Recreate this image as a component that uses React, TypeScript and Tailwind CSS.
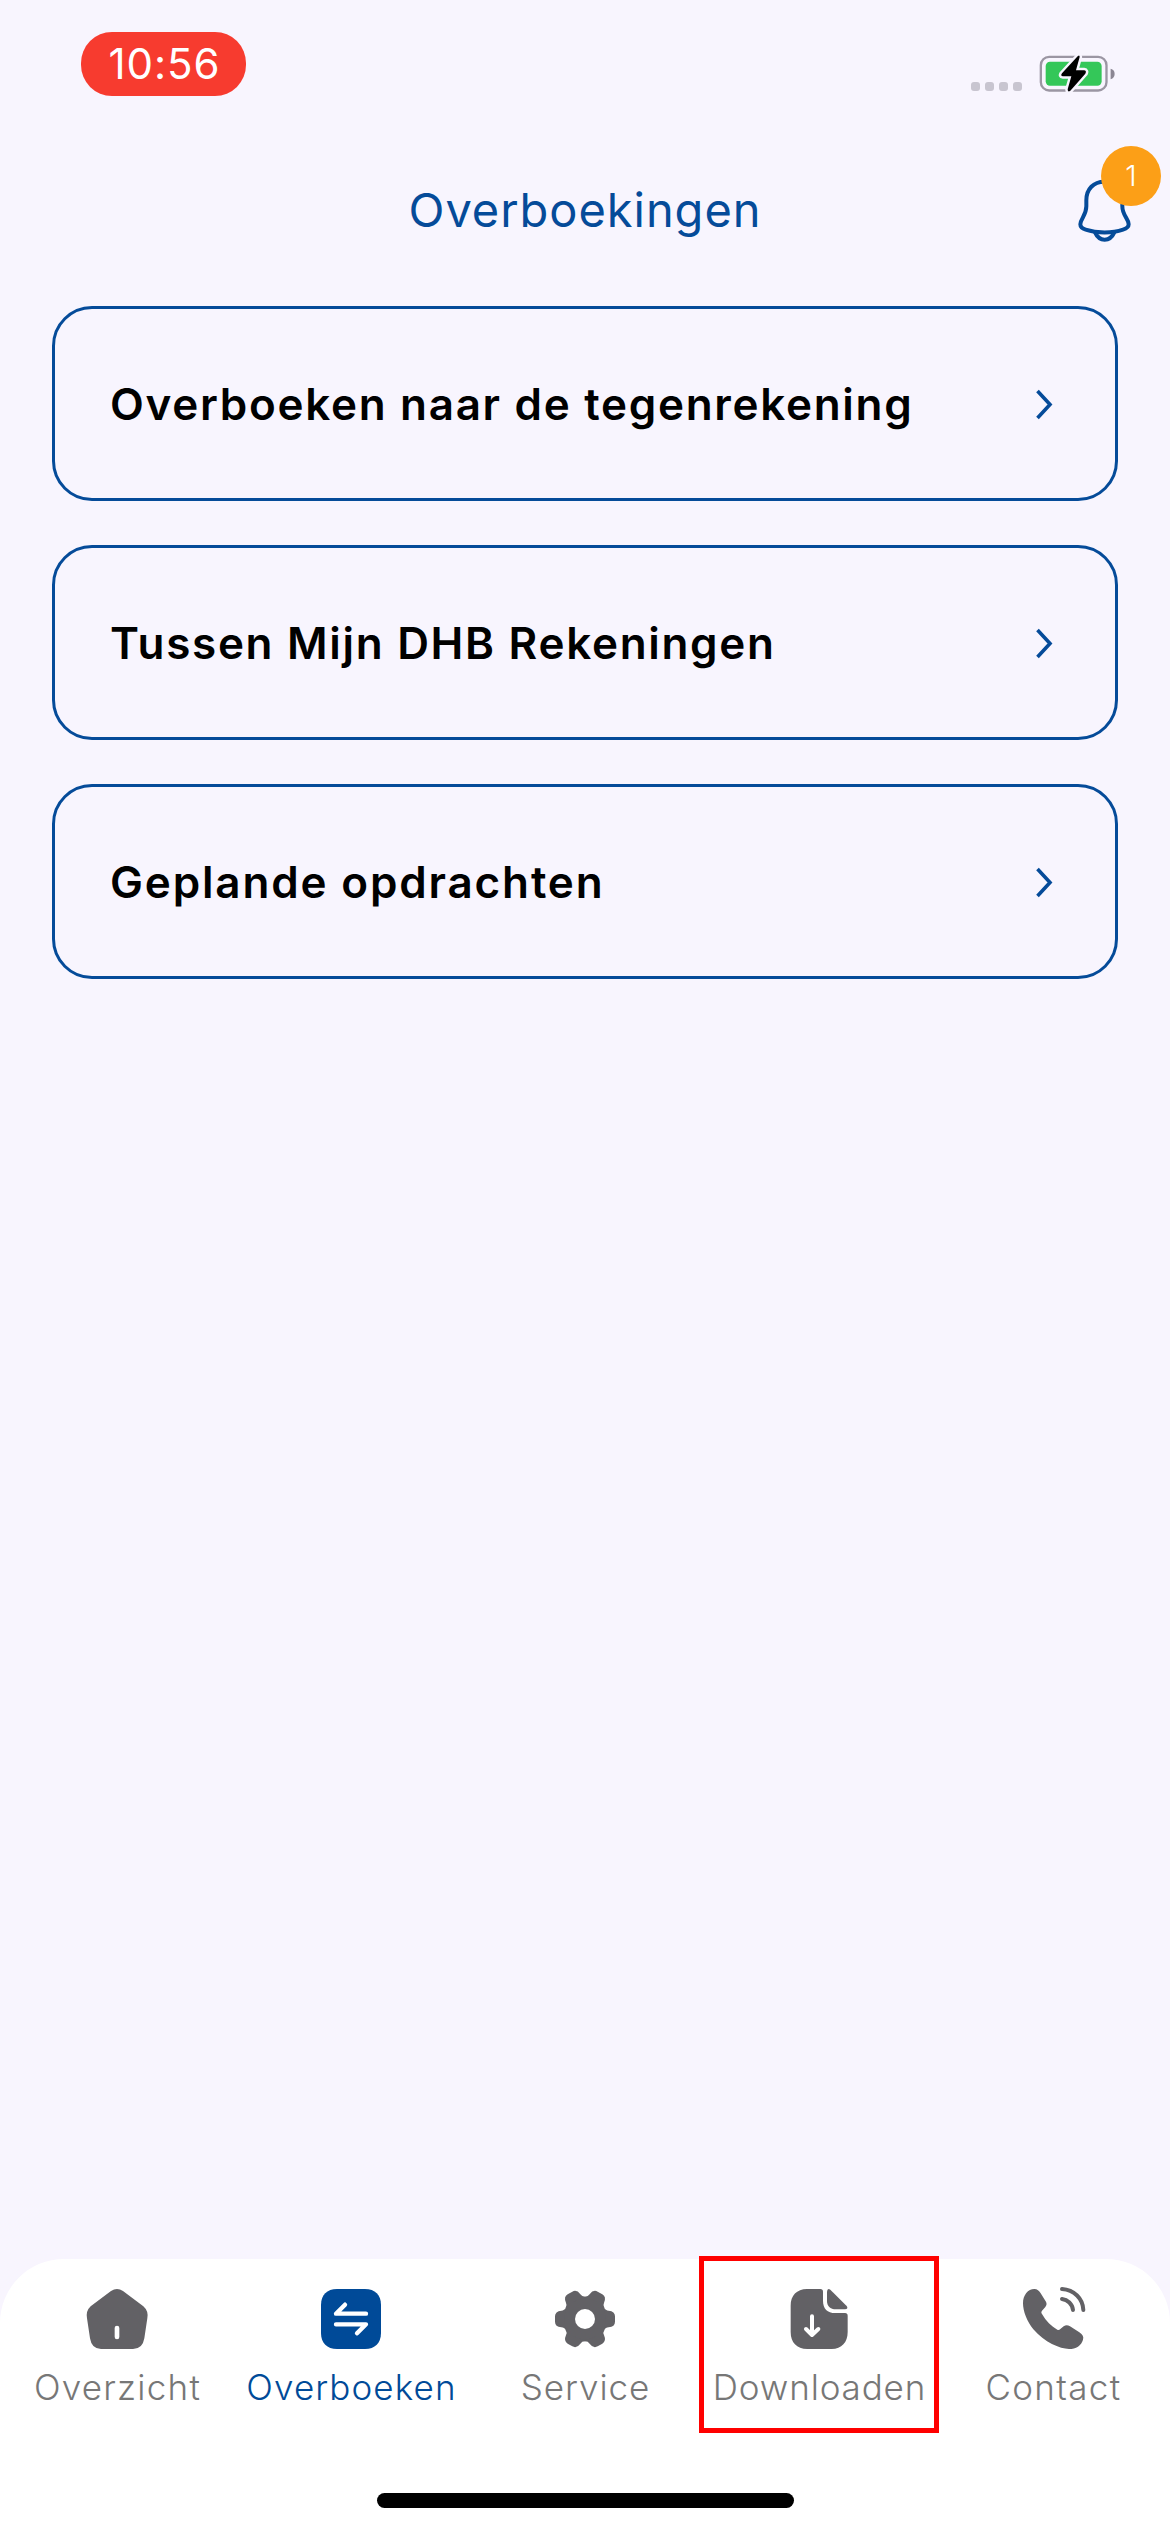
import type { ReactNode } from "react";

const GEAR_ANGLES = [0, 60, 120, 180, 240, 300];

function BatteryIcon() {
  const bolt =
    "M384 110 L337 161 Q331 169 340 170 H365 L354 209 Q354 219 362 213 L407 162 Q412 153 403 152 H379 L390 112 Q390 104 384 110 Z";
  return (
    <svg viewBox="265 100 235 122" className="h-[40.67px] w-[78.33px]">
      <rect x="273.5" y="111.5" width="197" height="101" rx="25" fill="none" stroke="#9b96a3" strokeWidth="7" />
      <rect x="288" y="126" width="168" height="72" rx="13" fill="#34c759" />
      <path d="M483 147 Q495 150 495 163 Q495 175 483 179 Z" fill="#8b8693" />
      <path d={bolt} fill="#f8f5fe" stroke="#f8f5fe" strokeWidth="15" strokeLinejoin="round" />
      <path d={bolt} fill="#000" />
    </svg>
  );
}

function BellIcon() {
  return (
    <svg viewBox="380 470 170 200" className="h-[66.67px] w-[56.67px]" fill="none" stroke="#054b99" strokeWidth="12">
      <path
        d="M462 484 C430 484 408 506 408 540 V558 C408 586 390 595 390 612 C390 621 396 625 406 628 C440 639 486 639 518 628 C528 625 535 621 535 612 C535 595 516 586 516 558 V540 C516 506 494 484 462 484 Z"
        strokeLinejoin="round"
      />
      <path d="M434 636 Q444 658 463 658 Q482 658 492 636" />
    </svg>
  );
}

function NavSvg({ cx, children }: { cx: number; children: ReactNode }) {
  return (
    <svg viewBox={`${cx - 108} 135 216 198`} className="h-[66px] w-[72px]" fill="#626165">
      {children}
    </svg>
  );
}

const homeIcon = (
  <NavSvg cx={351}>
    <path d="M333 153 Q351 141 369 153 L430 199 Q446 213 442 235 L433 295 Q428 327 399 327 H303 Q275 327 270 295 L261 235 Q257 213 272 199 Z" />
    <rect x="344" y="257" width="14" height="41" rx="7" fill="#fff" />
  </NavSvg>
);

const transferIcon = (
  <NavSvg cx={363}>
    <path
      d="M321 147 H405 C435 147 453 165 453 195 V279 C453 309 435 327 405 327 H321 C291 327 273 309 273 279 V195 C273 165 291 147 321 147 Z"
      fill="#004a98"
    />
    <path
      d="M408 221 H318 L345 194 M318 253 H408 L381 280"
      fill="none"
      stroke="#fff"
      strokeWidth="13"
      strokeLinecap="round"
      strokeLinejoin="round"
    />
  </NavSvg>
);

const gearIcon = (
  <NavSvg cx={315}>
    {GEAR_ANGLES.map((a) => (
      <path
        key={a}
        transform={`translate(315 237) rotate(${a})`}
        d="M0 1 L57 -34.5 Q62 -25 71 -25 Q90 -23 90 -8 V8 Q90 23 71 25 Q62 25 57 34.5 L0 1 Z"
      />
    ))}
    <circle cx="315" cy="237" r="62" />
    <circle cx="315" cy="237" r="30" fill="#fff" />
  </NavSvg>
);

const downloadIcon = (
  <NavSvg cx={387}>
    <path d="M351 147 H391 Q399 147 399 155 V182 C399 206 412 219 436 219 H465 Q473 219 473 227 V276 C473 307 455 327 425 327 H352 C320 327 302 307 302 276 V197 C302 167 320 147 351 147 Z" />
    <path d="M411 155 Q412 143 421 149 L470 198 Q476 207 465 208 H438 C420 208 411 198 411 182 Z" />
    <path
      d="M366 229 V284 M348 267 L366 285 L385 267"
      fill="none"
      stroke="#fff"
      strokeWidth="12"
      strokeLinecap="round"
      strokeLinejoin="round"
    />
  </NavSvg>
);

const phoneIcon = (
  <NavSvg cx={309}>
    <path d="M219 190 C219 165 234 147 253 147 C262 147 267 152 272 160 L286 182 C292 191 290 196 284 203 L276 212 C273 216 274 219 276 222 C288 243 304 259 322 269 C325 271 328 270 331 267 L341 259 C348 254 353 255 360 259 L388 277 C398 284 402 290 399 299 C394 317 378 327 357 327 C330 327 283 307 250 268 C231 245 219 214 219 190 Z" />
    <path
      d="M336 147 C372 149 399 176 400 210 M336 177 C353 179 367 192 369 210"
      fill="none"
      stroke="#626165"
      strokeWidth="12"
      strokeLinecap="round"
    />
  </NavSvg>
);

const options = [
  { label: "Overboeken naar de tegenrekening", tracking: "tracking-[1.7px]" },
  { label: "Tussen Mijn DHB Rekeningen", tracking: "tracking-[1.7px]" },
  { label: "Geplande opdrachten", tracking: "tracking-[1.85px]" },
];

const tabs = [
  { label: "Overzicht", icon: homeIcon, style: "tracking-[1.25px] text-[#777777]" },
  { label: "Overboeken", icon: transferIcon, style: "tracking-[1.1px] text-[#004a98]" },
  { label: "Service", icon: gearIcon, style: "tracking-[0.9px] text-[#777777]" },
  { label: "Downloaden", icon: downloadIcon, style: "tracking-[0.85px] text-[#777777]", highlighted: true },
  { label: "Contact", icon: phoneIcon, style: "tracking-[1.35px] text-[#777777]" },
];

export default function App() {
  return (
    <div className="flex h-[2532px] w-[1170px] flex-col overflow-hidden bg-[#f8f5fe] font-['Inter',sans-serif]">
      <div className="flex h-[152px] shrink-0 items-start justify-between pr-[53.4px] pl-[81px]">
        <div className="mt-8 flex h-16 w-[165px] items-center justify-center rounded-[31px] bg-[#f73b2f] pl-0.5 text-[42px] leading-none tracking-[0.9px] text-white">
          10:56
        </div>
        <div className="flex items-start">
          <div className="mt-[82px] mr-[16.3px] flex gap-[5px]">
            <span className="size-[9px] rounded-[3px] bg-[#c8c5d0]" />
            <span className="size-[9px] rounded-[3px] bg-[#c8c5d0]" />
            <span className="size-[9px] rounded-[3px] bg-[#c8c5d0]" />
            <span className="size-[9px] rounded-[3px] bg-[#c8c5d0]" />
          </div>
          <div className="mt-[53.33px]">
            <BatteryIcon />
          </div>
        </div>
      </div>

      <header className="grid h-[116px] shrink-0 grid-cols-[1fr_auto_1fr] items-center">
        <span />
        <h1 className="pb-0.5 text-[47px] leading-none font-[430] tracking-[0.95px] text-[#054b99]">Overboekingen</h1>
        <div className="flex justify-end pr-[36.67px]">
          <div className="relative">
            <BellIcon />
            <span className="absolute -top-[31px] left-[24.3px] flex size-[60px] items-center justify-center rounded-full bg-[#fc9f17] text-[29px] leading-none font-light text-white">
              1
            </span>
          </div>
        </div>
      </header>

      <main className="flex grow flex-col gap-11 px-[52px] pt-[38px]">
        {options.map((o) => (
          <button
            key={o.label}
            className="flex h-[195px] w-full items-center justify-between rounded-[40px] border-[3px] border-[#054b99] pr-[62px] pl-[55px] text-left"
          >
            <span className={`text-[44px] leading-none font-semibold whitespace-nowrap text-black ${o.tracking}`}>
              {o.label}
            </span>
            <svg viewBox="0 0 18 32" className="h-8 w-[18px]" fill="none" stroke="#054b99" strokeWidth="3.6">
              <path d="M2.5 3 L15 16.5 L2.5 30" />
            </svg>
          </button>
        ))}
      </main>

      <nav className="flex h-[273px] shrink-0 flex-col items-center rounded-t-[64px] bg-white">
        <div className="grid h-[234px] w-full grid-cols-5">
          {tabs.map((t) => (
            <div key={t.label} className="relative flex flex-col items-center pt-[26px]">
              {t.icon}
              <span className={`mt-4 pl-px text-[35px] leading-10 font-[340] whitespace-nowrap ${t.style}`}>{t.label}</span>
              {t.highlighted && (
                <div className="absolute -top-[3px] -left-[3px] h-[177px] w-[240px] border-[5px] border-[#ff0000]" />
              )}
            </div>
          ))}
        </div>
        <div className="h-[15px] w-[417px] rounded-full bg-black" />
      </nav>
    </div>
  );
}
